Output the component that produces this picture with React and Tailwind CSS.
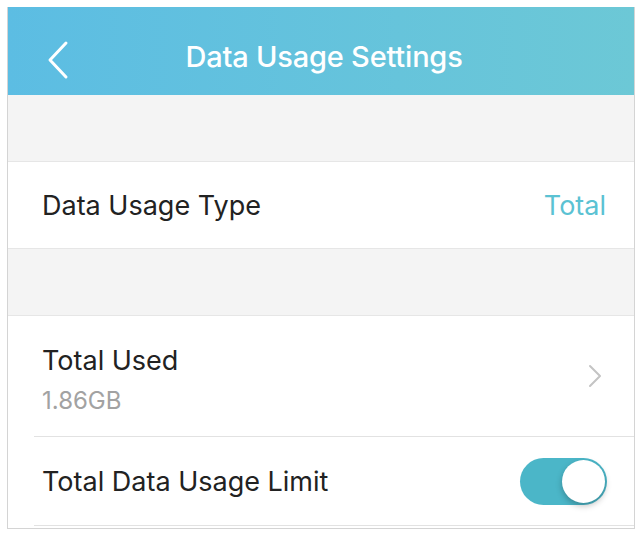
export default function App() {
  return (
    <div className="w-[640px] h-[535px] bg-white pt-[7px] pl-[7px]" style={{ fontFamily: "Inter, 'Open Sans', sans-serif" }}>
      <div className="w-[628px] h-[522px] border-l border-r border-b border-[#d4d4d4] flex flex-col overflow-hidden">
        <div className="h-[88px] shrink-0 flex items-center relative bg-gradient-to-r from-[#5cbde3] to-[#6cc8d6]">
          <svg className="absolute left-[38px] top-[33px]" width="24" height="40" viewBox="0 0 24 40" fill="none">
            <path d="M20 3 L4 20 L20 37" stroke="white" strokeWidth="3" strokeLinecap="round" strokeLinejoin="round" />
          </svg>
          <div className="w-full text-center text-white text-[29px] font-medium tracking-[-0.2px] pl-[6px] pt-[12px]">Data Usage Settings</div>
        </div>
        <div className="h-[67px] shrink-0 bg-[#f4f4f4] border-b border-[#e6e6e6]" />
        <div className="h-[87px] shrink-0 bg-white flex items-center justify-between pl-[34px] pr-[28px] pt-[3px] border-b border-[#e6e6e6]">
          <span className="text-[27px] text-[#222]">Data Usage Type</span>
          <span className="text-[27px] text-[#5bc2d3]">Total</span>
        </div>
        <div className="h-[67px] shrink-0 bg-[#f4f4f4] border-b border-[#e6e6e6]" />
        <div className="h-[121px] shrink-0 bg-white pl-[26px] flex flex-col">
          <div className="flex-1 flex items-center justify-between pl-[8px] pr-[32px] border-b border-[#e2e2e2]">
            <div className="flex flex-col pt-[8px]">
              <span className="text-[27px] leading-[34px] text-[#222]">Total Used</span>
              <span className="text-[24px] leading-[30px] text-[#a2a2a2] mt-[8px]">1.86GB</span>
            </div>
            <svg width="14" height="24" viewBox="0 0 14 24" fill="none">
              <path d="M2 2 L12 12 L2 22" stroke="#c4c4c4" strokeWidth="2" strokeLinecap="round" strokeLinejoin="round" />
            </svg>
          </div>
        </div>
        <div className="h-[89px] shrink-0 bg-white pl-[26px] flex flex-col">
          <div className="flex-1 flex items-center justify-between pl-[8px] pr-[27px] border-b border-[#e2e2e2]">
            <span className="text-[27px] text-[#222] pt-[3px]">Total Data Usage Limit</span>
            <div className="w-[87px] h-[47px] rounded-full bg-[#4bb6c8] relative">
              <div className="absolute right-[2px] top-[2px] w-[43px] h-[43px] rounded-full bg-white shadow-[0_3px_6px_rgba(0,0,0,0.25)]" />
            </div>
          </div>
        </div>
      </div>
    </div>
  );
}
